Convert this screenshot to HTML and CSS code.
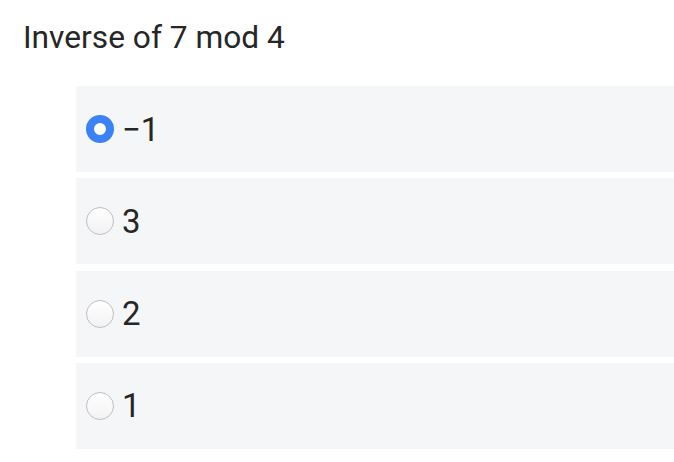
FILE: index.html
```html
<!DOCTYPE html>
<html lang="en">
<head>
  <meta charset="UTF-8" />
  <title>Quiz question</title>
  <link rel="stylesheet" href="styles.css">
</head>
<body>
  <h2 class="question">Inverse of 7 mod 4</h2>

  <form class="options">
    <label class="option"><input type="radio" name="q" checked> <span>−1</span></label>
    <label class="option"><input type="radio" name="q"> <span>3</span></label>
    <label class="option"><input type="radio" name="q"> <span>2</span></label>
    <label class="option"><input type="radio" name="q"> <span>1</span></label>
  </form>
</body>
</html>
```

FILE: styles.css
```css
body {
  margin: 0;
  font-family: Roboto, "Liberation Sans", sans-serif;
  color: #262626;
  background: #fff;
}
.question {
  margin: 0;
  padding: 18px 0 0 23px;
  height: 68px;
  box-sizing: border-box;
  font-size: 31.7px;
  font-weight: 400;
  line-height: 40px;
}
.options {
  margin: 18px 0 0 76px;
}
.option {
  display: flex;
  align-items: center;
  height: 86px;
  margin-bottom: 6.33px;
  padding-left: 10px;
  background: #f5f6f8;
  font-size: 33px;
}
.option input {
  appearance: none;
  -webkit-appearance: none;
  margin: 0 8px 0 0;
  width: 28px;
  height: 28px;
  border-radius: 50%;
  border: 1.5px solid #bfbfbf;
  background: linear-gradient(#fff, #f2f2f2);
  box-sizing: border-box;
}
.option input:checked {
  border: 8px solid #3b82f6;
  background: #fff;
}
```
